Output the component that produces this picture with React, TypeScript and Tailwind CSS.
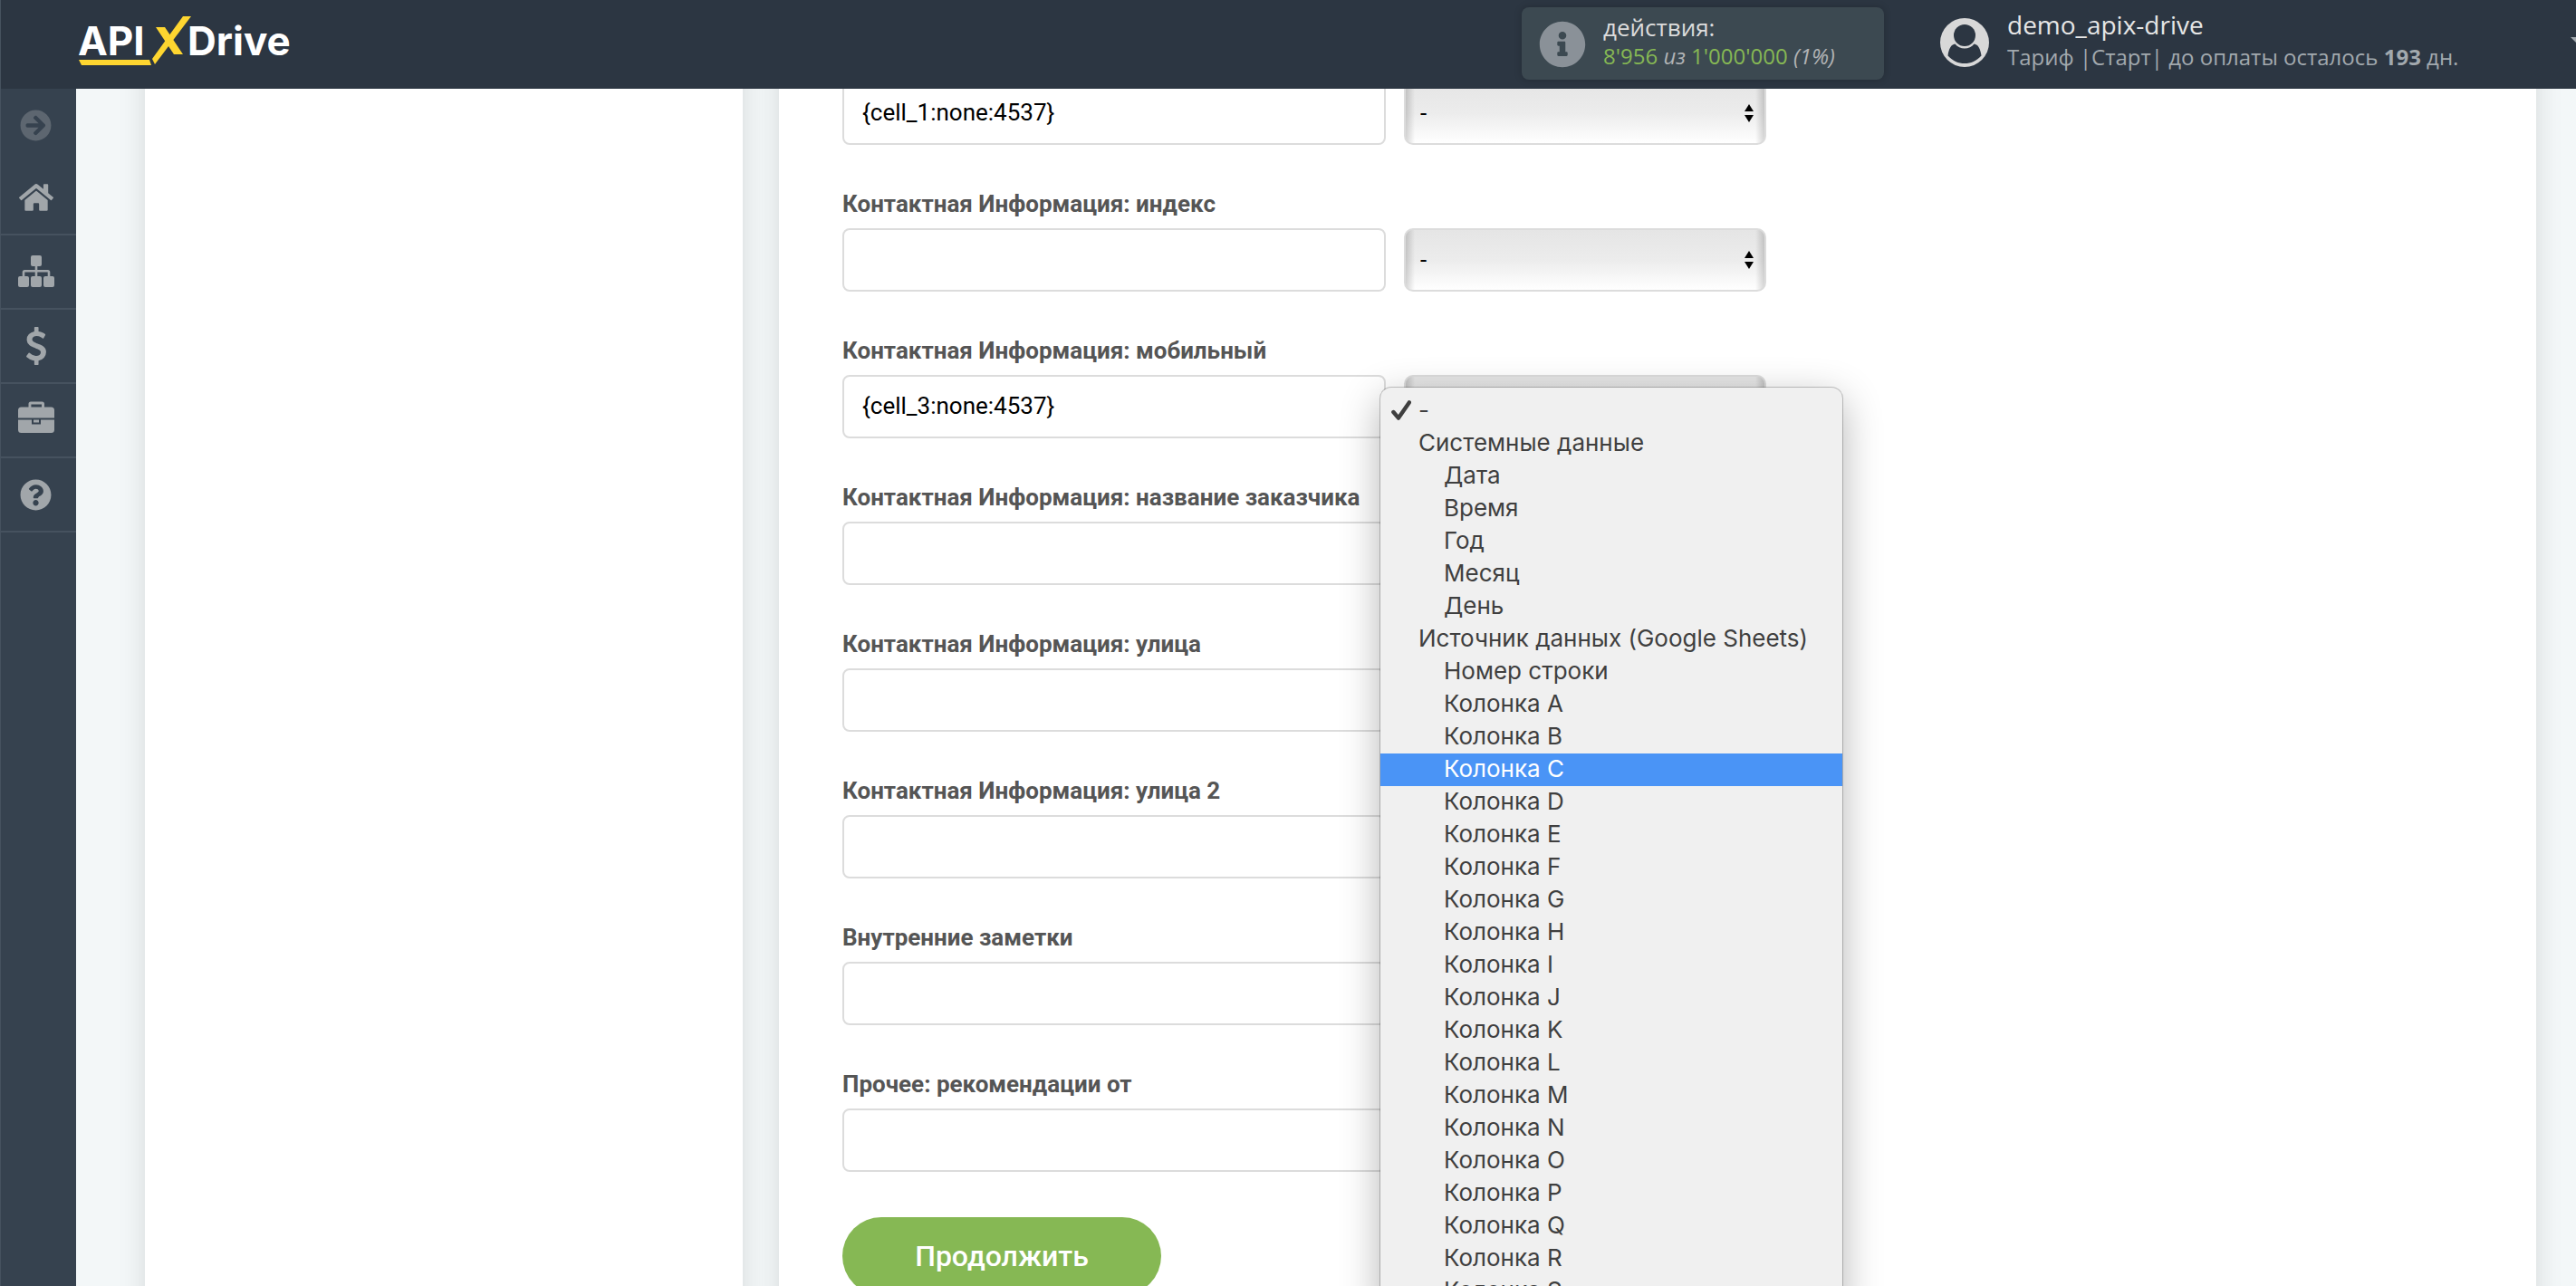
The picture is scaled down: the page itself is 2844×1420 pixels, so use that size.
import React, { useState } from 'react';
import { FaArrowCircleRight, FaHome, FaInfoCircle, FaQuestionCircle } from 'react-icons/fa';

const COLUMNS = 'ABCDEFGHIJKLMNOPQRS'.split('').map((letter) => `Колонка ${letter}`);

type Option = { text: string; group?: boolean; top?: boolean };

const OPTIONS: Option[] = [
  { text: '-', top: true },
  { text: 'Системные данные', group: true },
  { text: 'Дата' },
  { text: 'Время' },
  { text: 'Год' },
  { text: 'Месяц' },
  { text: 'День' },
  { text: 'Источник данных (Google Sheets)', group: true },
  { text: 'Номер строки' },
  ...COLUMNS.map((text) => ({ text })),
];

const FIELDS = [
  { id: 'field-1', label: '', value: '{cell_1:none:4537}' },
  { id: 'field-2', label: 'Контактная Информация: индекс', value: '' },
  { id: 'field-3', label: 'Контактная Информация: мобильный', value: '{cell_3:none:4537}', open: true },
  { id: 'field-4', label: 'Контактная Информация: название заказчика', value: '' },
  { id: 'field-5', label: 'Контактная Информация: улица', value: '' },
  { id: 'field-6', label: 'Контактная Информация: улица 2', value: '' },
  { id: 'field-7', label: 'Внутренние заметки', value: '' },
  { id: 'field-8', label: 'Прочее: рекомендации от', value: '' },
];

function Logo() {
  return (
    <svg className="h-[62px] w-[250px]" viewBox="84 14 250 62" role="img" aria-label="APIXDrive">
      <text x="86" y="61" fill="#fff" fontFamily="Inter, sans-serif" fontWeight="700" fontSize="44">
        API
      </text>
      <text x="207" y="61" fill="#fff" fontFamily="Inter, sans-serif" fontWeight="700" fontSize="44">
        Drive
      </text>
      <g fill="#fed630">
        <path d="M87 66H165L167 72H90Z" />
        <path d="M202 18H211L171 71L168 65Z" />
        <path d="M172 30H182L202 60H192Z" />
      </g>
    </svg>
  );
}

function UserIcon() {
  return (
    <svg className="size-[54px] shrink-0" viewBox="0 0 54 54" aria-hidden="true">
      <circle cx="27" cy="27" r="27" fill="#d8d8d8" />
      <g fill="#2c3642">
        <circle cx="27" cy="19" r="12" />
        <path d="M8.5 41.5C9.5 34 12 29 16.5 28.5C19 32 23 33.5 27 33.5C31 33.5 35 32 37.5 28.5C42 29 44.5 34 45.5 41.5C40 47.5 34 50 27 50C20 50 14 47.5 8.5 41.5Z" />
      </g>
    </svg>
  );
}

function SitemapIcon() {
  return (
    <svg className="h-9 w-10" viewBox="0 0 40 36" fill="currentColor">
      <rect x="14" y="0" width="12" height="12" rx="2" />
      <rect x="0" y="23" width="12" height="12" rx="2" />
      <rect x="14" y="23" width="12" height="12" rx="2" />
      <rect x="28" y="23" width="12" height="12" rx="2" />
      <path d="M20 11V24M6 24V18.5Q6 17.3 7.2 17.3H32.8Q34 17.3 34 18.5V24" fill="none" stroke="currentColor" strokeWidth="2.6" />
    </svg>
  );
}

function DollarIcon() {
  return (
    <svg className="h-[42px] w-6" viewBox="0 0 1024 1792" fill="currentColor">
      <path d="M978 1185q0 153-99.5 263.5t-258.5 136.5v175q0 14-9 23t-23 9h-135q-13 0-22.5-9.5t-9.5-22.5v-175q-66-9-127.5-31t-101.5-44.5-74-48-46.5-37.5-17.5-18q-17-21-2-41l103-135q7-10 23-12 15-2 24 9l2 2q113 99 243 125 37 8 74 8 81 0 142.5-43t61.5-122q0-28-15-53t-33.5-42-58.5-37.5-66-32-80-32.5q-39-16-61.5-25t-61.5-26.5-62.5-31-56.5-35.5-53.5-42.5-43.5-49-35.5-58-21-66.5-8.5-78q0-138 98-242t255-134v-180q0-13 9.5-22.5t22.5-9.5h135q14 0 23 9t9 23v176q57 6 110.5 23t87 33.5 63.5 37.5 39 29 15 14q17 18 5 38l-81 146q-8 15-23 16-14 3-27-7-3-3-14.5-12t-39-26.5-58.5-32-74.5-26-85.5-11.5q-95 0-155 43t-60 111q0 26 8.5 48t29.5 41.5 39.5 33 56 31 60.5 27 70 27.5q53 20 81 31.5t76 35 75.5 42.5 62 50 53 63.5 31.5 76.5 13 94z" />
    </svg>
  );
}

function BriefcaseIcon() {
  return (
    <svg className="h-[42px] w-10" viewBox="0 0 40 42" fill="currentColor">
      <path d="M11.5 7V3Q11.5 0.5 14 0.5H26.5Q29 0.5 29 3V7H26V3.6H14.4V7Z" />
      <path d="M3.5 6.5H36.5Q40 6.5 40 10V18.5H0V10Q0 6.5 3.5 6.5Z" />
      <path d="M0 20.5H15V25.5H25V20.5H40V31.5Q40 35 36.5 35H3.5Q0 35 0 31.5Z" />
      <path d="M17 20.5H23V23.5H17Z" />
    </svg>
  );
}

function Header() {
  return (
    <header className="z-20 flex h-[98px] shrink-0 items-start overflow-hidden border-l border-[#46525f] bg-[#2c3642] font-['Open_Sans',sans-serif]">
      <a href="#home" className="ml-[83px] mt-3.5">
        <Logo />
      </a>
      <div className="mt-2 ml-auto flex h-20 w-[400px] rounded-lg bg-[#3c4951] pl-[19px] shadow-[0_0_8px_rgba(0,0,0,0.2)]">
        <FaInfoCircle className="mt-[15px] size-[52px] text-[#8a9198]" />
        <div className="ml-[19px] pt-1.5 whitespace-nowrap">
          <p className="text-[26px] leading-8 text-[#dcdcdc]">действия:</p>
          <p className="text-2xl leading-8 text-[#b1b3b5]">
            <span className="text-[#86b854]">8'956</span> <i>из</i>{' '}
            <span className="text-[#86b854]">1'000'000</span> <i>(1%)</i>
          </p>
        </div>
      </div>
      <button type="button" className="ml-[62px] flex items-start text-left whitespace-nowrap">
        <span className="mt-5">
          <UserIcon />
        </span>
        <span className="ml-5 flex w-[622px] flex-col gap-1 pt-[11px]">
          <span className="text-[28px] leading-8 text-[#e6e6e6]">demo_apix-drive</span>
          <span className="text-2xl leading-8 text-[#a2a9ae]">
            Тариф |Старт| до оплаты осталось <b>193</b> дн.
          </span>
        </span>
        <svg className="mt-[41px] -mr-2.5 h-2 w-4" viewBox="0 0 16 8" fill="#a2a9ae" aria-hidden="true">
          <path d="M0 0H16L8 8Z" />
        </svg>
      </button>
    </header>
  );
}

const NAV = [
  { name: 'Главная', icon: <FaHome className="size-[38px]" /> },
  { name: 'Связи', icon: <SitemapIcon /> },
  { name: 'Оплата', icon: <DollarIcon /> },
  { name: 'Проекты', icon: <BriefcaseIcon /> },
  { name: 'Помощь', icon: <FaQuestionCircle className="size-[35px]" /> },
];

function Sidebar() {
  return (
    <nav className="w-[84px] shrink-0 border-l border-[#46525f] bg-[#36424f]">
      <button type="button" aria-label="Развернуть" className="flex h-20 w-full items-center justify-center pr-1.5 text-[#5d6670]">
        <FaArrowCircleRight className="size-[35px]" />
      </button>
      {NAV.map((item) => (
        <a
          key={item.name}
          href="#nav"
          aria-label={item.name}
          className="flex h-[82px] items-center justify-center border-b-2 border-[#46525f] pr-1.5 text-[#a1a6aa]"
        >
          {item.icon}
        </a>
      ))}
    </nav>
  );
}

function OptionMenu() {
  const active = 'Колонка C';
  return (
    <ul
      role="listbox"
      aria-label="Значение"
      className="absolute top-3.5 -left-[26px] z-10 w-[510px] rounded-xl bg-[#f0f0f0] py-2 font-['Inter',sans-serif] text-[26px] leading-[34px] whitespace-nowrap text-[#3f3f3f] shadow-[0_0_0_1px_rgba(0,0,0,0.22),0_12px_44px_rgba(0,0,0,0.3)]"
    >
      {OPTIONS.map((option) => {
        const indent = option.top ? 'pl-3' : option.group ? 'pl-[42px]' : 'pl-[70px]';
        const color = option.text === active ? 'bg-[#4a94f6] text-white' : '';
        return (
          <li
            key={option.text}
            role={option.group ? 'presentation' : 'option'}
            aria-selected={option.group ? undefined : !!option.top}
            className={`flex h-9 ${indent} ${color}`}
          >
            {option.top && (
              <svg className="mt-1.5 mr-2 size-[22px]" viewBox="0 0 22 22" fill="none" stroke="currentColor" strokeWidth="4.4" strokeLinecap="round" strokeLinejoin="round" aria-hidden="true">
                <path d="M2.4 13L8 19.6L19.8 2.4" />
              </svg>
            )}
            {option.text}
          </li>
        );
      })}
    </ul>
  );
}

function Field({ id, label, value, open }: { id: string; label: string; value: string; open?: boolean }) {
  const [text, setText] = useState(value);
  return (
    <div className="flex flex-col gap-3">
      {label && (
        <label htmlFor={id} className="text-[26px] leading-[30px] font-bold text-[#555]">
          {label}
        </label>
      )}
      <div className="flex gap-5">
        <input
          id={id}
          type="text"
          aria-label={label || 'Контактная Информация'}
          value={text}
          onChange={(event) => setText(event.target.value)}
          className="h-[70px] w-[600px] rounded-lg border-2 border-[#dcdcdc] bg-white px-5 pb-0.5 text-[26px] text-black outline-none"
        />
        <div className="relative w-[400px]">
          <select
            aria-label={`${label || 'Контактная Информация'}: значение`}
            className="h-[70px] w-full appearance-none rounded-[10px] border-2 border-[#dcdcdc] bg-[linear-gradient(to_right,rgba(0,0,0,0.16),transparent_10px,transparent_calc(100%-10px),rgba(0,0,0,0.16)),linear-gradient(to_bottom,#e5e5e5,#ececec_50%,#ffffff)] px-4 text-[26px] text-black outline-none"
          >
            <option>-</option>
          </select>
          <svg className="pointer-events-none absolute top-[25px] right-3.5 h-5 w-2.5" viewBox="0 0 10 20" aria-hidden="true">
            <path d="M5 0L10 8H0ZM0 12H10L5 20Z" />
          </svg>
          {open && <OptionMenu />}
        </div>
      </div>
    </div>
  );
}

export default function App() {
  return (
    <div className="flex h-screen flex-col overflow-hidden font-['Roboto',sans-serif]">
      <Header />
      <div className="flex min-h-0 flex-1">
        <Sidebar />
        <main className="flex min-w-0 flex-1 gap-10 overflow-hidden bg-[#f3f7f8] pr-11 pl-[76px]">
          <aside className="-my-10 w-[660px] shrink-0 bg-white shadow-[0_0_28px_rgba(0,0,0,0.12)]" />
          <section className="-my-10 min-w-0 flex-1 bg-white pt-8 pl-[70px] shadow-[0_0_28px_rgba(0,0,0,0.12)]">
            <form className="flex flex-col items-start gap-[50px]">
              {FIELDS.map((field) => (
                <Field key={field.id} {...field} />
              ))}
              <button type="button" className="h-[86px] w-[352px] rounded-full bg-[#86b854] text-[32px] font-medium text-white">
                Продолжить
              </button>
            </form>
          </section>
        </main>
      </div>
    </div>
  );
}
